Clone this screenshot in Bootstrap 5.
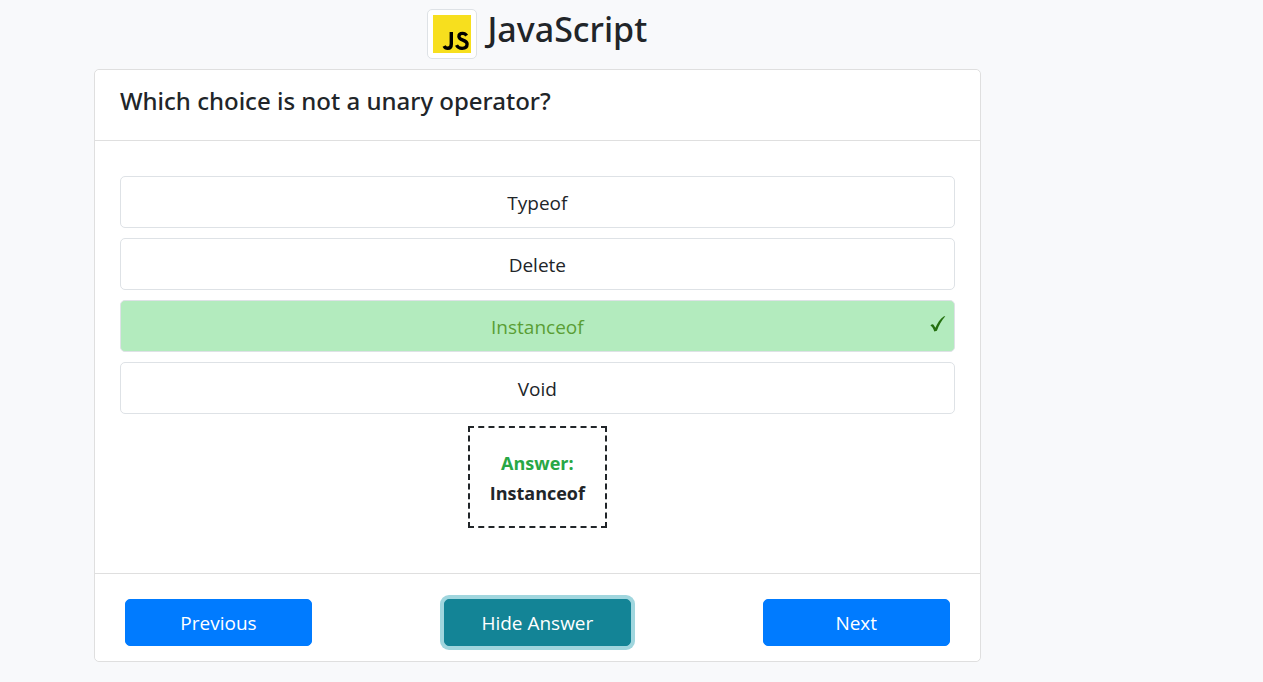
<!DOCTYPE html>
<html lang="en">
<head>
<meta charset="utf-8">
<meta name="viewport" content="width=device-width, initial-scale=1">
<title>JavaScript Quiz</title>
<link href="https://cdn.jsdelivr.net/npm/bootstrap@5.3.0/dist/css/bootstrap.min.css" rel="stylesheet">
<style>
  body { background: #f8f9fb; color: #212529; font-family: "Open Sans", "Noto Sans", sans-serif; font-size: 19px; line-height: 30px; }
  .quiz-page { padding: 9px 22.35% 20px 7.44%; }
  .quiz-title { gap: 10px; margin-bottom: 10px; }
  .quiz-title h1, .quiz-card h2 { font-family: "Noto Sans", "Open Sans", sans-serif; font-weight: 500; }
  .quiz-title h1 { font-size: 34px; line-height: 40px; }
  .logo-frame { width: 50px; height: 50px; padding: 4px; background: #fff; border: 1px solid #dee2e6; border-radius: 5px; }
  .quiz-card { border: 1px solid #dfdfdf; border-radius: 5px; }
  .quiz-card .card-header { background: #fff; border-bottom: 1px solid #dfdfdf; padding: 16px 25px 24px; }
  .quiz-card h2 { font-size: 24px; line-height: 30px; }
  .quiz-card .card-body { padding: 35px 25px 45px; }
  .choices { gap: 10px; margin-bottom: 12px; }
  .choice { min-height: 52px; padding: 11px 10px 9px; background: #fff; border: 1px solid #dee2e6; border-radius: 5px; color: #212529; }
  .choice.is-correct { background: #b3ebbe; color: #5a9e35; }
  .tick { top: 14px; right: 8px; }
  .answer-box { padding: 20px 20px 18px; border: 2px dashed #212529; font-size: 18px; font-weight: 700; }
  .answer-box .answer-label { color: #28a745; }
  .quiz-card .card-footer { background: #fff; border-top: 1px solid #dfdfdf; padding: 25px 30px 15px; }
  .quiz-btn { width: 187px; padding: 8px 15px 7px; border-radius: 5px; font-size: 19px; line-height: 30px; --bs-btn-color: #fff; --bs-btn-bg: #007bff; --bs-btn-border-color: #007bff; --bs-btn-hover-color: #fff; --bs-btn-hover-bg: #0069d9; }
  .quiz-btn.is-toggled { --bs-btn-bg: #138496; --bs-btn-border-color: #138496; --bs-btn-hover-bg: #117a8b; box-shadow: 0 0 0 4px #a0d6de; }
</style>
</head>
<body>
<main class="quiz-page">
  <header class="quiz-title d-flex justify-content-center">
    <span class="logo-frame d-block flex-shrink-0">
      <svg class="d-block" width="40" height="40" viewBox="0 0 40 40" role="img" aria-label="JavaScript logo">
        <rect x="1" y="1" width="38" height="38" fill="#f7df1e"/>
        <path d="M19.3 18v12c0 3-1.300 4.300-3.600 4.300-1.700 0-2.900-.9-3.600-2.300" fill="none" stroke="#000" stroke-width="3.400"/>
        <path d="M34.600 21.600c-.9-1.500-2.200-2.200-4-2.200-2.200 0-3.700 1.200-3.700 3 0 4.500 8.200 3 8.200 7.700 0 2.600-2 4.200-5 4.200-2.700 0-4.600-1.100-5.600-3.200" fill="none" stroke="#000" stroke-width="3.300"/>
      </svg>
    </span>
    <h1 class="m-0">JavaScript</h1>
  </header>

  <section class="card quiz-card">
    <div class="card-header">
      <h2 class="m-0">Which choice is not a unary operator?</h2>
    </div>
    <div class="card-body d-flex flex-column">
      <div class="choices d-flex flex-column">
        <button type="button" class="choice w-100">Typeof</button>
        <button type="button" class="choice w-100">Delete</button>
        <button type="button" class="choice is-correct w-100 position-relative">Instanceof
          <svg class="tick position-absolute" width="16" height="18" viewBox="0 0 16 18" aria-hidden="true">
            <path d="M.4 10.6c1.3-1.3 2.5-1.7 3.3-.7l1.7 2.9C7.4 8.100 10 4 14 1.200L15.300 1.300C11.600 5.600 8.900 10.300 6.900 15.700L4.300 16.500C3.400 13.900 2.200 11.600.4 10.600z" fill="#257010"/>
          </svg>
        </button>
        <button type="button" class="choice w-100">Void</button>
      </div>
      <div class="answer-box align-self-center text-center">
        <div class="answer-label">Answer:</div>
        <div>Instanceof</div>
      </div>
    </div>
    <div class="card-footer d-flex flex-wrap justify-content-between gap-3">
      <button type="button" class="btn quiz-btn">Previous</button>
      <button type="button" class="btn quiz-btn is-toggled">Hide Answer</button>
      <button type="button" class="btn quiz-btn">Next</button>
    </div>
  </section>
</main>
<script src="https://cdn.jsdelivr.net/npm/bootstrap@5.3.0/dist/js/bootstrap.bundle.min.js"></script>
</body>
</html>
